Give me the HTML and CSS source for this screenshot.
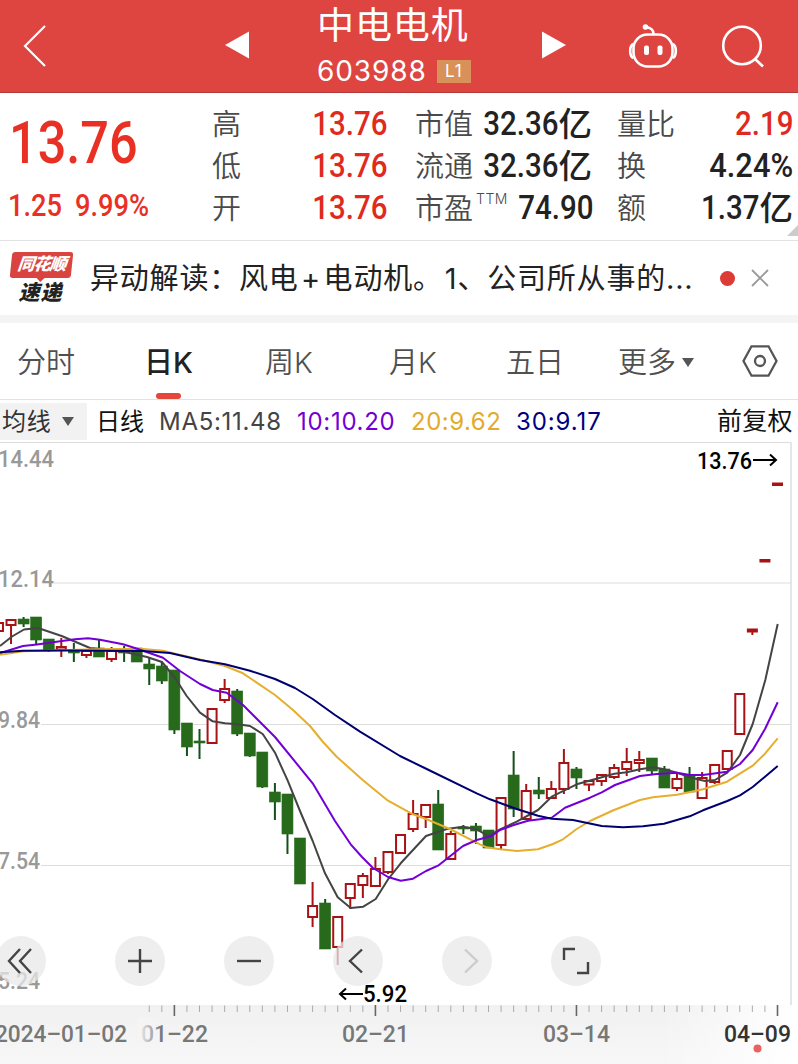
FILE: index.html
```html
<!DOCTYPE html>
<html lang="zh-CN">
<head>
    <meta charset="UTF-8">
    <meta name="viewport" content="width=device-width, initial-scale=1.0">
    <title>中电电机 603988</title>
    <link rel="stylesheet" href="styles.css">
</head>
<body>
<header class="top">
    <svg class="back" width="26" height="44" viewBox="0 0 26 44"><path d="M23 2 L3 22 L23 42"/></svg>
    <svg class="prev" width="24" height="28" viewBox="0 0 24 28"><path d="M24 0.5 V27.5 L0 14 Z"/></svg>
    <div class="stock">
        <h1>中电电机</h1>
        <div class="code"><span>603988</span><b>L1</b></div>
    </div>
    <svg class="next" width="24" height="28" viewBox="0 0 24 28"><path d="M0 0.5 V27.5 L24 14 Z"/></svg>
    <svg class="robot" width="50" height="46" viewBox="0 0 50 46">
        <rect x="5.5" y="10.5" width="39" height="32" rx="14"/>
        <path d="M5.5 20 Q2.2 21 2.2 27 Q2.2 33 5.5 34 M44.5 20 Q47.8 21 47.8 27 Q47.8 33 44.5 34"/>
        <path d="M25.500 10 Q25.500 4 18 3"/>
        <circle class="solid" cx="17.500" cy="3" r="2.800"/>
        <rect class="solid" x="16" y="21.500" width="5" height="9.500" rx="2"/>
        <rect class="solid" x="29.500" y="21.500" width="5" height="9.500" rx="2"/>
    </svg>
    <svg class="search" width="44" height="44" viewBox="0 0 44 44"><circle cx="21" cy="20.500" r="18.800"/><path d="M33.500 33.500 L42 41.500"/></svg>
</header>

<section class="quote">
    <div class="price">
        <div class="now num">13.76</div>
        <div class="change"><span class="num">1.25</span><span class="num">9.99%</span></div>
    </div>
    <dl class="c1">
        <div><dt>高</dt><dd class="up"><span class="num">13.76</span></dd></div>
        <div><dt>低</dt><dd class="up"><span class="num">13.76</span></dd></div>
        <div><dt>开</dt><dd class="up"><span class="num">13.76</span></dd></div>
    </dl>
    <dl class="c2">
        <div><dt>市值</dt><dd><span class="num">32.36</span>亿</dd></div>
        <div><dt>流通</dt><dd><span class="num">32.36</span>亿</dd></div>
        <div><dt>市盈<sup>TTM</sup></dt><dd><span class="num">74.90</span></dd></div>
    </dl>
    <dl class="c3">
        <div><dt>量比</dt><dd class="up"><span class="num">2.19</span></dd></div>
        <div><dt>换</dt><dd><span class="num wide">4.24%</span></dd></div>
        <div><dt>额</dt><dd><span class="num">1.37</span>亿</dd></div>
    </dl>
    <i class="corner"></i>
</section>

<section class="news">
    <div class="logo">
        <span class="tag">同花顺</span>
        <span class="sub">速递</span>
    </div>
    <p>异动解读：风电<span class="plus">+</span>电动机。<span class="one">1</span>、公司所从事的...</p>
    <i class="dot"></i>
    <svg class="close" width="18" height="18" viewBox="0 0 18 18"><path d="M1 1 L17 17 M17 1 L1 17"/></svg>
</section>

<nav class="tabs">
    <a>分时</a>
    <a class="active">日K</a>
    <a>周K</a>
    <a>月K</a>
    <a>五日</a>
    <a class="more">更多<i class="caret"></i></a>
    <svg width="36" height="32" viewBox="0 0 36 32"><path d="M9.500 1.300 H26.500 L34.500 16 L26.500 30.700 H9.500 L1.500 16 Z"/><circle cx="18" cy="16" r="5"/></svg>
</nav>

<div class="ma">
    <span class="select">均线<i class="caret"></i></span>
    <span class="day">日线</span>
    <span class="ma5">MA5:11.48</span>
    <span class="ma10">10:10.20</span>
    <span class="ma20">20:9.62</span>
    <span class="ma30">30:9.17</span>
    <span class="fq">前复权</span>
</div>

<main class="chart">
    <svg id="kline" width="798" height="622" viewBox="0 442 798 622"></svg>
    <div class="tools">
        <button><svg viewBox="-25 -25 50 50"><path d="M-1 -12 L-12 0 L-1 12 M10 -12 L-1 0 L10 12"/></svg></button>
        <button><svg viewBox="-25 -25 50 50"><path d="M-12 0 H12 M0 -12 V12"/></svg></button>
        <button><svg viewBox="-25 -25 50 50"><path d="M-12 0 H12"/></svg></button>
        <button><svg viewBox="-25 -25 50 50"><path d="M4 -11.500 L-8 0 L4 11.500"/></svg></button>
        <button class="off"><svg viewBox="-25 -25 50 50"><path d="M-2 -11.500 L10 0 L-2 11.500"/></svg></button>
        <button><svg viewBox="-25 -25 50 50"><path d="M-12 -1 V-12 H-1 M12 1 V12 H1"/></svg></button>
    </div>
</main>

<script>
    const STEP = 12.565;
    const LAST_X = 777.5;

    // [up/down, body top, body bottom, high, low], oldest first
    const candles = [
        ["u",623,631,618,631],["u",620,625,620,644],["d",619,624,617,627],["d",617,640,617,644],
        ["d",639,650,639,652],["u",647,649.5,638,657],["d",651,653,643,662],["u",651,655,651,658],
        ["d",648,657,640,657],["u",651,659,647,662],["d",651,653,646,662],["d",648,662,648,662],
        ["d",664,669,657,685],["d",666,681,662,684],["d",670,730,670,734],["d",723,747,723,756],
        ["d",741,743,729,759],["u",709,743,709,743.5],["u",689,700,679,703],["d",691,734,689,736],
        ["d",733,756,733,757],["d",752,787,752,788],["d",792,802,783,820],["d",794,834,794,854],
        ["d",838,884,838,884],["u",906,917,882,927],["d",903,949,899,949],["u",917,947,917,965],
        ["u",884,898,883,909],["u",876,885,873,898],["u",869,886,857,886],["u",852,872,852,874],
        ["u",835,853,835,853],["u",814,829,800,832],["u",805,817,804,828],["d",804,850,790,850],
        ["u",834,859,831,860],["d",827,829,825,834],["d",826,831,823,844],["d",830,848,830,848],
        ["u",798,845,798,849],["d",775,809,751,817],["u",791,819,784,819],["d",790,794,777,799],
        ["u",789,798,781,799],["u",763,789,749,794],["d",769,778,767,789],["u",781,784.5,781,791],
        ["u",775,781,775,786],["u",768,777,764,779],["u",762,769,748,776],["u",760,763,751,772],
        ["d",758,771,758,775],["d",769,788,766,788],["u",779,788,774,791],["d",775,792,767,792],
        ["u",778,798,772,799],["u",765,782,765,784],["u",751,769,751,769],["u",694,734,694,734],
        ["u",629.5,631.5,629.5,635],["u",560,561.5,560,561.5],["u",483.500,485,483.5,485]
    ];

    const lines = {
        gray: [0,646,12,636.5,24,629.5,38,628,61.7,636,90,648,125,652,147,657,162,662,175,678,186.7,696,200,712.7,212.7,721.3,225,723.3,238,724.3,250,726,262.7,734,275,752.7,287.7,780.7,300,811,312.7,841,325,873.3,337.7,897.3,350.7,908,363.3,906.7,375.7,899,388.3,879,400.7,863.3,426,836,446.7,829,463,826.7,476.7,829.3,488.3,836,500,829.3,516.7,821.7,538,810,551.7,796.7,576.7,784.3,600,777.7,614.3,773.7,626.7,772.3,640,769.3,653.3,767.3,664.3,769.3,677,772.7,693.3,778.3,705,781,715,780,727.3,772.7,740,755,752.7,724,765.3,680,777.7,624],
        gold: [0,654.7,23,651.3,67,650,110,649,143,649,163,650.7,173,653.3,200,659.5,225,666,243,673.3,275,695,293,710,310,726,323,742,336.7,756.7,362.7,780,388,800.7,413,814.3,426,819,450,829,480,844.3,486.7,847.3,500,849.3,516.7,851,538,849.3,553,844,563,839.3,576.7,829,590,821,614,810,640,800,653,797.3,677,794.7,703,789.3,727,781.7,752.7,765.7,765,753.7,777.7,738.3],
        purple: [0,653,23,646,37,644.5,62,641,75,639.3,88,638.3,100,639.7,123,644.3,138,649,163,657.7,180,671,200,684,212.7,690,226.7,692.7,243,705,275,737,312.7,783.3,335,821,350.7,844.3,362,857,373,868,388,877,400.7,880.7,413,878.7,426,871,438,865.7,463,846,476.7,840,491.7,836,500,830,513,825.3,528,820.7,551.7,817.7,565,807.7,590,797.7,601.7,792.3,615,785,640,776,656.7,774,677,772.7,690,775,703,775,727,771.7,740,764,752.7,750,765,729,777.7,702.3],
        navy: [0,652.3,23,650.7,67,650.5,143,651,170,653,200,660,225,664.3,250,670.7,275,679,295,688,312.7,699,335,715,360,731.7,400,756,426.7,769,476.7,793.3,490,799.3,516.7,809,538,815.7,551.7,818.7,573,820,601.7,826,623,827.3,643,826.3,664,823.7,689.7,816.3,703,810.3,727.3,801,740,795.3,752.7,787,765,776.7,777.7,766]
    };

    // text, x, baseline, width, class
    const labels = [
        ["14.44",-2,467,56,"y"],["12.14",-2,587,56,"y"],["9.84",-2,728,42,"y"],["7.54",-2,869,42,"y"],["5.24",-2,989,42,"y"],
        ["13.76",697,469,55,"mark"],["5.92",363,1002,44,"mark"],
        ["2024–01–02",-5,1042,132,"x"],["01–22",141,1042,67,"x"],["02–21",342,1042,67,"x"],["03–14",543,1042,67,"x"],["04–09",724,1042,67,"x now-date"]
    ];

    let svg = `<defs>
        <linearGradient id="axis" x2="0" y2="1"><stop offset="0" stop-color="#f1f1f1"/><stop offset="1" stop-color="#f7f7f7"/></linearGradient>
        <linearGradient id="fade"><stop offset="0" stop-color="#f5f5f5"/><stop offset="1" stop-color="#f5f5f5" stop-opacity="0"/></linearGradient>
        <linearGradient id="fadeRight"><stop offset="0" stop-color="#fff" stop-opacity="0"/><stop offset="1" stop-color="#fff"/></linearGradient>
    </defs>
    <path class="frame" d="M0 442.500 H791"/><path class="frame side" d="M791 442 V1005"/>
    <path class="frame" d="M54 583 H791 M41 724.500 H791 M41 865.500 H791"/>
    <rect y="1005" width="798" height="59" fill="url(#axis)"/>
    <rect x="660" y="1005" width="138" height="59" fill="url(#fadeRight)"/>`;

    // axis ticks, a long one every 16 days
    for (let k = 0; k <= 50; k++) {
        const x = LAST_X - k * STEP;
        svg += k % 16 === 0
            ? `<path class="tick long" d="M${x} 1005 V1016"/>`
            : `<path class="tick" d="M${x} 1005.500 V1012"/>`;
    }

    candles.forEach(([dir, top, bottom, high, low], i) => {
        const x = LAST_X - (candles.length - 1 - i) * STEP;
        svg += `<g class="${dir}"><path d="M${x} ${high} V${top} M${x} ${bottom} V${low}"/>`;
        if (dir === "d") {
            svg += `<rect x="${x - 5.5}" y="${top}" width="11" height="${bottom - top}"/></g>`;
        } else {
            svg += `<rect x="${x - 4.5}" y="${top}" width="9" height="${bottom - top}"/></g>`;
        }
    });

    for (const name in lines) {
        svg += `<polyline class="line ${name}" points="${lines[name].join(" ")}"/>`;
    }

    labels.forEach(([text, x, y, w, cls]) => {
        svg += `<text class="${cls}" x="${x}" y="${y}" textLength="${w}" lengthAdjust="spacingAndGlyphs">${text}</text>`;
    });

    svg += `<path class="arrow" d="M753 460 H776 M770 454.500 L776 460 L770 465.500 M363 994 H340 M346 988.500 L340 994 L346 999.500"/>
    <rect x="138" y="1018" width="24" height="28" fill="url(#fade)"/>
    <circle cx="757.500" cy="1048.500" r="4" fill="#e8625f"/>`;

    document.getElementById("kline").innerHTML = svg;
</script>
</body>
</html>
```
FILE: styles.css
```css
body {
    margin: 0;
    width: 798px;
    height: 1064px;
    overflow: hidden;
    background: #fff;
    color: #222;
    font-family: Inter, "Noto Sans CJK SC", sans-serif;
}
svg {
    display: block;
    fill: none;
    flex: none;
}
.num {
    display: inline-block;
    font-family: Roboto, sans-serif;
    font-weight: 500;
    transform: scaleX(.88);
    transform-origin: right;
}

/* header */
.top {
    display: flex;
    box-sizing: border-box;
    height: 93px;
    padding-left: 22px;
    background: #de4440;
    border-bottom: 1px solid #b03a38;
    color: #fff;
}
.top svg { stroke: #fff; stroke-width: 2.6; }
.top .back { margin-top: 24px; stroke-width: 2.2; }
.top .prev { margin: 31px 0 0 177px; fill: #fff; stroke: none; }
.top .next { margin: 31px 0 0 32px; fill: #fff; stroke: none; }
.top .robot { margin: 24px 0 0 62px; }
.top .solid { fill: #fff; stroke: none; }
.top .search { margin: 25px 0 0 43px; }
.stock {
    width: 192px;
    margin-left: 68px;
    margin-right: 1px;
}
.stock h1 {
    margin: 0;
    height: 56px;
    font-size: 37px;
    line-height: 51px;
    font-weight: 400;
    letter-spacing: .9px;
    white-space: nowrap;
}
.code {
    display: flex;
    align-items: center;
    height: 30px;
    font-size: 28px;
    letter-spacing: .9px;
}
.code b {
    width: 34px;
    height: 23px;
    margin-left: 10px;
    background: #d9915a;
    font-size: 17px;
    line-height: 23px;
    font-weight: 400;
    text-align: center;
}

/* quote */
.quote {
    position: relative;
    display: flex;
    box-sizing: border-box;
    height: 148px;
    border-bottom: 1px solid #e2e2e2;
}
.price { width: 212px; color: #e93024; }
.price .num { transform-origin: left; }
.price .now {
    height: 98px;
    margin-left: 9px;
    font-size: 60px;
    line-height: 99px;
    transform: scaleX(.84);
}
.change {
    display: flex;
    margin-left: 8px;
    font-size: 31px;
    line-height: 30px;
}
.change .num { width: 67px; }
dl {
    margin: 10px 0 0;
    font-size: 29px;
}
dl div {
    display: flex;
    justify-content: space-between;
    height: 42px;
    line-height: 42px;
}
dt {
    padding-top: 1px;
    color: #4a4a4a;
    font-weight: 350;
    white-space: nowrap;
}
dt sup {
    font-size: 14px;
    line-height: 1;
    vertical-align: 15px;
    margin-left: 3px;
    letter-spacing: .5px;
}
dd {
    display: flex;
    margin: 0;
    font-size: 33.5px;
    font-weight: 500;
    white-space: nowrap;
}
.up { color: #e02a20; }
.wide { transform: scaleX(.92); }
.c1 { width: 175px; }
.c2 { width: 175px; margin-left: 28px; }
.c3 { width: 176px; margin-left: 27px; }
.corner {
    position: absolute;
    right: 0;
    bottom: 4px;
    border-left: 11px solid transparent;
    border-bottom: 11px solid #ccc;
}

/* news */
.news {
    display: flex;
    align-items: center;
    height: 74px;
    border-bottom: 8px solid #f4f4f4;
}
.logo {
    width: 61px;
    height: 52px;
    margin: 0 18px 0 11px;
    text-align: center;
    font-weight: 900;
    font-style: italic;
}
.logo span { display: block; }
.tag {
    height: 26px;
    border-radius: 3px;
    background: #d94441;
    color: #fff;
    font-size: 17px;
    line-height: 25px;
    letter-spacing: -1px;
    transform: skewX(-6deg);
}
.tag::after {
    content: "";
    display: block;
    width: 0;
    margin: 0 auto;
    border: 5px solid transparent;
    border-top-color: #d94441;
    border-bottom: 0;
}
.sub {
    margin-left: -2px;
    font-size: 21px;
    line-height: 29px;
    letter-spacing: 1px;
}
.news p {
    width: 610px;
    margin: 0;
    font-size: 29px;
    line-height: 42px;
    padding-top: 2px;
    letter-spacing: .8px;
    white-space: nowrap;
}
.plus {
    display: inline-block;
    width: 25px;
    text-align: center;
}
.one { margin-left: 2px; }
.dot {
    width: 15px;
    height: 15px;
    margin-left: 20px;
    border-radius: 50%;
    background: #dc3b36;
}
.close { margin-left: 16px; stroke: #999; stroke-width: 1.8; }

/* tabs */
.tabs {
    display: flex;
    box-sizing: border-box;
    height: 77px;
    padding-left: 17px;
    border-bottom: 1px solid #e2e2e2;
    font-size: 29px;
    line-height: 79px;
    font-weight: 350;
    color: #505050;
}
.tabs a { width: 121px; margin-right: 3px; white-space: nowrap; }
.tabs a:first-child { width: 124px; }
.tabs a:nth-child(2) { width: 118px; }
.tabs a:nth-child(4) { width: 114px; }
.tabs a:nth-child(5) { width: 109px; }
.tabs a.more { width: 121px; }
.tabs .active {
    color: #222;
    font-weight: 500;
}
.tabs .active::after {
    content: "";
    display: block;
    width: 25px;
    height: 6px;
    margin: -9px 0 0 12px;
    border-radius: 3px;
    background: #e5463a;
}
.tabs svg { margin-top: 22px; stroke: #555; stroke-width: 2.3; }
.caret {
    display: inline-block;
    border: 6.5px solid transparent;
    border-top: 9px solid #555;
    border-bottom: 0;
    vertical-align: 6px;
    margin-left: 6px;
}

/* moving averages */
.ma {
    display: flex;
    align-items: center;
    height: 42px;
    font-size: 24px;
    line-height: 37px;
    letter-spacing: .7px;
    white-space: nowrap;
}
.select {
    width: 85px;
    padding-left: 2px;
    background: #f2f2f2;
    color: #333;
}
.select .caret { margin-left: 11px; vertical-align: 4px; }
.day { width: 63px; margin-left: 9px; color: #111; letter-spacing: 0; }
.ma5 { width: 138px; color: #444; }
.ma10 { width: 114px; color: #7300d2; }
.ma20 { width: 105px; color: #e3aa2c; letter-spacing: .5px; }
.ma30 { width: 201px; color: #000080; letter-spacing: .9px; }
.fq { color: #111; font-size: 25px; letter-spacing: .3px; }

/* chart */
.chart {
    position: relative;
    height: 622px;
}
.frame { stroke: #dcdcdc; stroke-width: 1; }
.side { stroke: #e6e6e6; stroke-width: 2; }
.tick { stroke: #aaa; stroke-width: 1; }
.tick.long { stroke: #666; stroke-width: 1.6; }
.u { stroke: #a81214; stroke-width: 2; }
.u rect { fill: #fff; }
.d { stroke: #14501a; stroke-width: 2; }
.d rect { fill: #276a1c; stroke: #276a1c; stroke-width: .6; }
.line { stroke-width: 2; stroke-linejoin: round; }
.gray { stroke: #444; }
.gold { stroke: #e6ae2d; }
.purple { stroke: #7200d6; }
.navy { stroke: #000070; }
#kline text {
    font-family: Roboto, sans-serif;
    font-weight: 500;
    font-size: 24px;
}
.y { fill: #999; }
.x { fill: #777; }
#kline .now-date { fill: #333; }
.mark { fill: #000; }
.arrow { stroke: #000; stroke-width: 2; }
.tools {
    position: absolute;
    left: -4px;
    top: 494px;
    display: flex;
    gap: 59px;
}
.tools button {
    width: 50px;
    height: 50px;
    padding: 0;
    border: 0;
    border-radius: 50%;
    background: rgba(232, 232, 232, .75);
}
.tools button:first-child { margin-right: 9.5px; }
.tools path { stroke: #444; stroke-width: 2.4; }
.tools .off path { stroke: #ccc; }
```
